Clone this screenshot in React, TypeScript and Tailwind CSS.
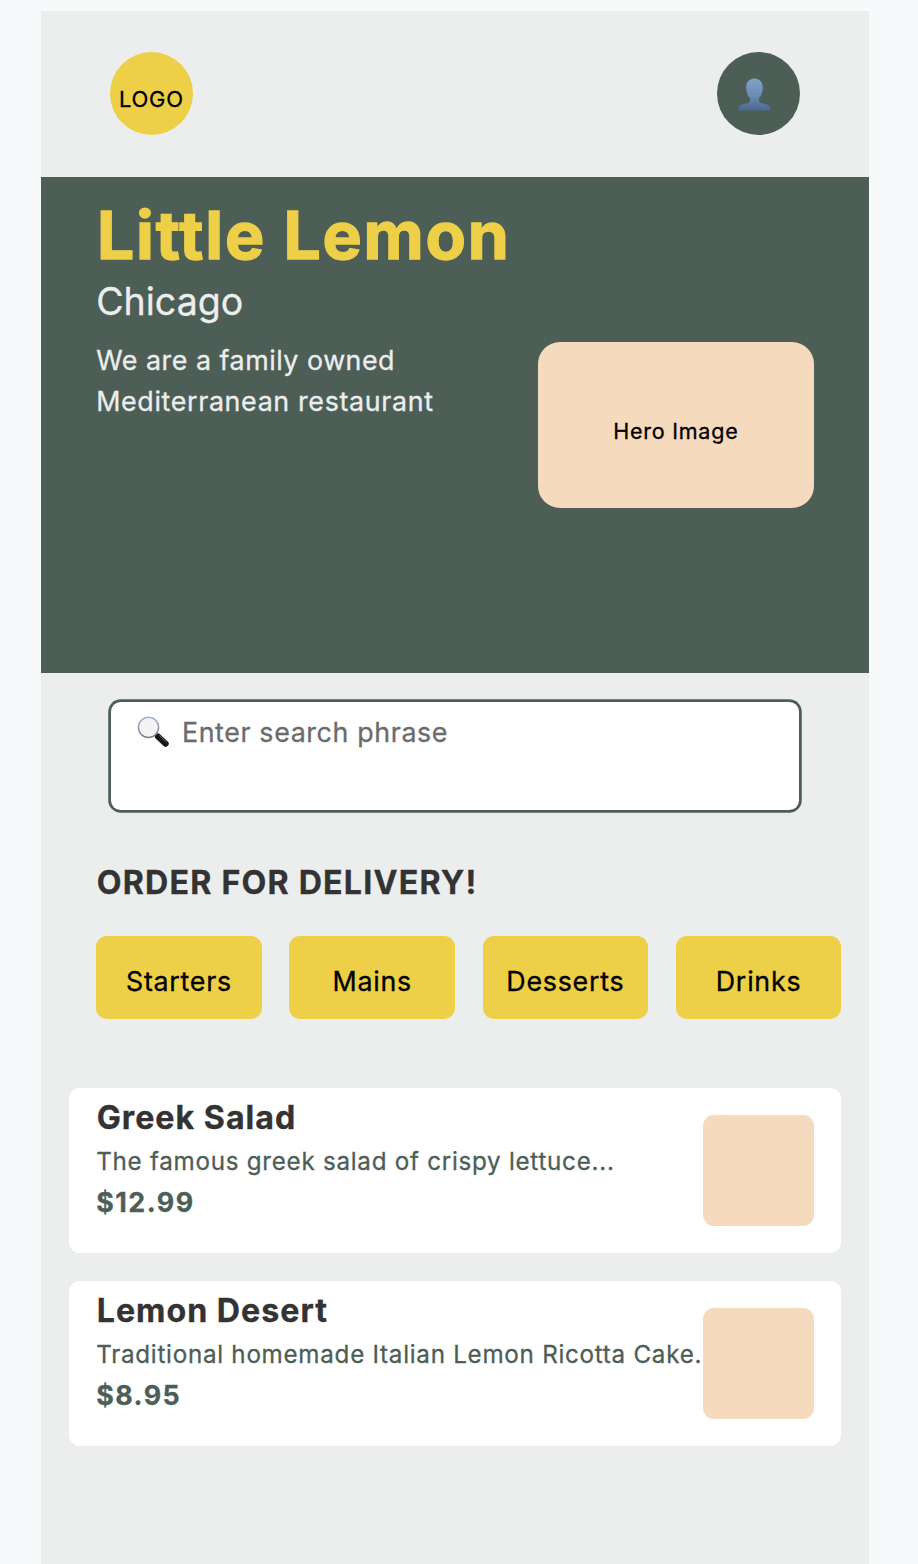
const categories = ["Starters", "Mains", "Desserts", "Drinks"];

const dishes = [
  { name: "Greek Salad", text: "The famous greek salad of crispy lettuce...", price: "$12.99" },
  { name: "Lemon Desert", text: "Traditional homemade Italian Lemon Ricotta Cake.", price: "$8.95" },
];

function UserIcon() {
  return (
    <svg viewBox="0 0 34 34" className="mt-[2px] mr-[8px] h-[33px] w-[33px]">
      <defs>
        <linearGradient id="bust" x1="0" y1="0" x2="0" y2="1">
          <stop offset="0" stopColor="#82a3c6" />
          <stop offset="0.55" stopColor="#6a8bb2" />
          <stop offset="1" stopColor="#4c688f" />
        </linearGradient>
      </defs>
      <path
        fill="url(#bust)"
        d="M17 0.5c5.2 0 8.600 3.700 8.600 9.300 0 5-1.600 8.500-4 11v2.200c0 2.200 1.700 2.900 4.300 3.400 4.400.8 7.300 1.800 7.700 7.100H0.400c0.400-5.300 3.300-6.300 7.700-7.100 2.600-.5 4.300-1.200 4.300-3.400v-2.200c-2.400-2.500-4-6-4-11 0-5.600 3.400-9.300 8.600-9.300z"
      />
    </svg>
  );
}

function SearchIcon() {
  return (
    <svg viewBox="0 0 32 32" className="mt-[3.500px] h-8 w-8 shrink-0">
      <defs>
        <linearGradient id="rim" x1="0" y1="0" x2="0" y2="1">
          <stop offset="0" stopColor="#a3b6d3" />
          <stop offset="1" stopColor="#7d7d7d" />
        </linearGradient>
      </defs>
      <path d="M18.500 18.200l3 3" stroke="#8a8a8a" strokeWidth="2.500" />
      <path d="M20.900 20.500l7.800 7.200" stroke="#17181c" strokeWidth="6" strokeLinecap="round" />
      <path d="M22.700 19.700l6.600 6.100" stroke="#666b72" strokeWidth="1" strokeLinecap="round" />
      <circle cx="11.500" cy="11.300" r="10.100" fill="#f4f4f6" stroke="url(#rim)" strokeWidth="1.500" />
    </svg>
  );
}

export default function App() {
  return (
    <div className="h-[1564px] overflow-hidden bg-[#f7f9fb] pt-[11px] pl-[41px] font-['Inter',sans-serif] whitespace-nowrap [-webkit-text-stroke:0.3px]">
      <div className="h-[1553px] w-[828px] bg-[#ebeeed]">
        <header className="flex h-[165.6px] items-center justify-between px-[69px]">
          <div className="flex size-[82.8px] items-center justify-center rounded-full bg-[#edcf48] pt-[10.800px] text-[22px] tracking-[0.7px] text-black">
            LOGO
          </div>
          <div className="flex size-[82.8px] items-center justify-center rounded-full bg-[#4d5e57]">
            <UserIcon />
          </div>
        </header>

        <section className="flex h-[496.8px] justify-between bg-[#4d5e57] px-[55.2px]">
          <div className="pt-[23.6px]">
            <h1 className="pl-[0.8px] text-[66px] leading-[70px] font-bold tracking-[1.750px] text-[#edcf48] [-webkit-text-stroke:1.4px]">
              Little Lemon
            </h1>
            <p className="mt-[9.800px] text-[37.5px] leading-[44px] text-[#ebeeed]">Chicago</p>
            <p className="mt-[15.900px] text-[26.8px] leading-[41.4px] text-[#ebeeed]">
              <span className="tracking-[0.53px]">We are a family owned</span>
              <br />
              <span className="tracking-[0.66px]">Mediterranean restaurant</span>
            </p>
          </div>
          <div className="mt-[165.6px] flex h-[165.6px] w-[276px] items-center justify-center rounded-[22px] bg-[#f5dabe] pt-[12px] text-[21.5px] tracking-[0.77px] text-black">
            Hero Image
          </div>
        </section>

        <div className="mx-[70.4px] mt-[28.9px] flex h-[107.7px] items-start gap-[12.5px] rounded-[9.700px] bg-white pt-[10px] pl-[26px] shadow-[0_0_0_2.76px_#4d5e57]">
          <SearchIcon />
          <span className="text-[26.8px] leading-[40px] tracking-[0.63px] text-[#6b6b6b]">Enter search phrase</span>
        </div>

        <h2 className="mt-[52.600px] ml-[55.2px] pl-[0.5px] text-[32.2px] leading-[40px] font-bold tracking-[1.200px] text-[#333333]">
          ORDER FOR DELIVERY!
        </h2>

        <nav className="mt-[33.200px] ml-[55.2px] flex gap-[27.6px]">
          {categories.map((name) => (
            <button
              key={name}
              className="flex h-[82.8px] w-[165.6px] items-center justify-center rounded-[11px] bg-[#edcf48] pt-[7.500px] text-[26.8px] tracking-[0.75px] text-black"
            >
              {name}
            </button>
          ))}
        </nav>

        <div className="mx-[27.6px] mt-[69px] flex flex-col gap-[27.6px]">
          {dishes.map((d) => (
            <article key={d.name} className="flex h-[165.6px] items-start justify-between rounded-[11px] bg-white px-[27.6px]">
              <div className="w-0 pt-[12.300px]">
                <h3 className="pl-[0.5px] text-[32.2px] leading-[36px] font-bold tracking-[1px] text-[#333333]">{d.name}</h3>
                <p className="mt-[8px] text-[24.2px] leading-[36px] tracking-[0.73px] text-[#4d5e57]">{d.text}</p>
                <p className="mt-[4px] text-[26.8px] leading-[36px] font-bold tracking-[1.500px] text-[#4d5e57]">{d.price}</p>
              </div>
              <div className="mt-[27.6px] size-[110.4px] rounded-[11px] bg-[#f5dabe]" />
            </article>
          ))}
        </div>
      </div>
    </div>
  );
}
